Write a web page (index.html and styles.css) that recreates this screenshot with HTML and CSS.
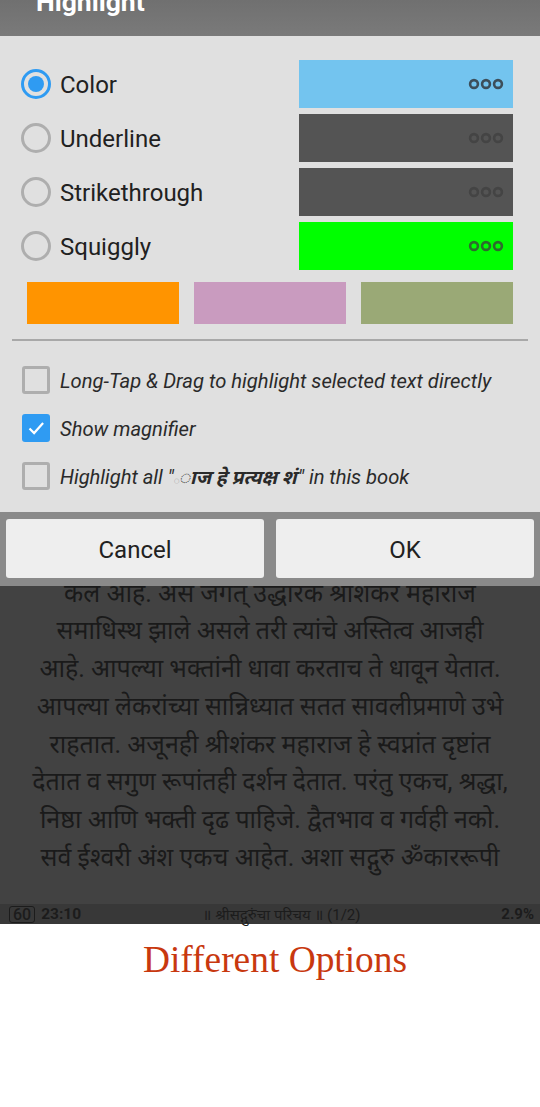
FILE: index.html
```html
<!DOCTYPE html>
<html lang="en">
<head>
<meta charset="utf-8">
<title>Highlight</title>
<link rel="stylesheet" href="styles.css">
</head>
<body>
<div class="screen">
  <header class="title-bar"><h1 class="title">Highlight</h1></header>
  <section class="panel">
    <div class="mode-row">
      <span class="radio radio-on"></span><span class="mode-label">Color</span>
      <span class="swatch sw-blue"><svg class="dots" viewBox="0 0 36 12"><g fill="none" stroke="#3c4e5a" stroke-width="2.6"><circle cx="6" cy="6" r="3.9"/><circle cx="18" cy="6" r="3.9"/><circle cx="30" cy="6" r="3.9"/></g></svg></span>
    </div>
    <div class="mode-row">
      <span class="radio"></span><span class="mode-label">Underline</span>
      <span class="swatch sw-dark"><svg class="dots" viewBox="0 0 36 12"><g fill="none" stroke="#444" stroke-width="2.6"><circle cx="6" cy="6" r="3.9"/><circle cx="18" cy="6" r="3.9"/><circle cx="30" cy="6" r="3.9"/></g></svg></span>
    </div>
    <div class="mode-row">
      <span class="radio"></span><span class="mode-label">Strikethrough</span>
      <span class="swatch sw-dark"><svg class="dots" viewBox="0 0 36 12"><g fill="none" stroke="#444" stroke-width="2.6"><circle cx="6" cy="6" r="3.9"/><circle cx="18" cy="6" r="3.9"/><circle cx="30" cy="6" r="3.9"/></g></svg></span>
    </div>
    <div class="mode-row">
      <span class="radio"></span><span class="mode-label">Squiggly</span>
      <span class="swatch sw-green"><svg class="dots" viewBox="0 0 36 12"><g fill="none" stroke="#2d6a2d" stroke-width="2.6"><circle cx="6" cy="6" r="3.9"/><circle cx="18" cy="6" r="3.9"/><circle cx="30" cy="6" r="3.9"/></g></svg></span>
    </div>
    <div class="presets">
      <span class="preset pre-orange"></span>
      <span class="preset pre-pink"></span>
      <span class="preset pre-olive"></span>
    </div>
    <hr class="divider">
    <div class="check-row"><span class="check"></span><span class="check-label">Long-Tap &amp; Drag to highlight selected text directly</span></div>
    <div class="check-row"><span class="check check-on"><svg viewBox="0 0 28 28" class="tick"><path d="M7.5 14.5l4.6 4.6 9-10" fill="none" stroke="#fff" stroke-width="2.2"/></svg></span><span class="check-label">Show magnifier</span></div>
    <div class="check-row"><span class="check"></span><span class="check-label check-label-mixed">Highlight all "<span class="mark">◌</span><b class="deva-bold">ाज हे प्रत्यक्ष शं</b>" in this book</span></div>
  </section>
  <div class="button-bar">
    <button class="btn">Cancel</button>
    <button class="btn">OK</button>
  </div>
  <main class="reader">
    <div class="reader-text">
      <p>कल आहे. असे जगत् उद्धारक श्रीशंकर महाराज</p>
      <p>समाधिस्थ झाले असले तरी त्यांचे अस्तित्व आजही</p>
      <p>आहे. आपल्या भक्तांनी धावा करताच ते धावून येतात.</p>
      <p>आपल्या लेकरांच्या सान्निध्यात सतत सावलीप्रमाणे उभे</p>
      <p>राहतात. अजूनही श्रीशंकर महाराज हे स्वप्नांत दृष्टांत</p>
      <p>देतात व सगुण रूपांतही दर्शन देतात. परंतु एकच, श्रद्धा,</p>
      <p>निष्ठा आणि भक्ती दृढ पाहिजे. द्वैतभाव व गर्वही नको.</p>
      <p>सर्व ईश्वरी अंश एकच आहेत. अशा सद्गुरु ॐकाररूपी</p>
    </div>
  </main>
  <footer class="status">
    <span class="status-left"><span class="battery">60</span><b class="clock">23:10</b></span>
    <span class="status-mid">॥ श्रीसद्गुरुंचा परिचय ॥ (1/2)</span>
    <b class="status-right">2.9%</b>
  </footer>
  <div class="caption">Different Options</div>
</div>
</body>
</html>
```
FILE: styles.css
```css
* { box-sizing: border-box; }
html, body { margin: 0; padding: 0; background: #fff; }
.screen { width: 540px; height: 1107px; overflow: hidden; font-family: Roboto, "Noto Sans", "Noto Sans Devanagari", sans-serif; }
.title-bar { height: 36px; background: linear-gradient(#707070, #7a7a7a); display: flex; align-items: flex-end; padding: 0 0 19px 36px; overflow: hidden; }
.title { margin: 0; font-size: 26.5px; line-height: 30px; font-weight: 700; color: #fff; flex: none; }
.panel { height: 476px; background: #e0e0e0; padding: 24px 27px 0 21px; }
.mode-row { height: 48px; margin-bottom: 6px; display: flex; align-items: center; }
.radio { width: 30px; height: 30px; border-radius: 50%; border: 3px solid #aeaeae; flex: none; position: relative; }
.radio-on { border-color: #2f9bf2; }
.radio-on::after { content: ""; position: absolute; inset: 4px; border-radius: 50%; background: #2f9bf2; }
.mode-label { margin-left: 9px; font-size: 24px; line-height: 30px; padding-top: 2px; color: #212121; flex: 1; }
.swatch { width: 214px; height: 48px; flex: none; display: flex; align-items: center; justify-content: flex-end; padding-right: 9px; }
.dots { width: 36px; height: 12px; display: block; }
.sw-blue { background: #73c4ef; }
.sw-dark { background: #545454; }
.sw-green { background: #00ff00; }
.presets { display: flex; gap: 15px; margin: 12px 0 0 6px; }
.preset { width: 152px; height: 42px; }
.pre-orange { background: #ff9400; }
.pre-pink { background: #c99bbf; }
.pre-olive { background: #9aa976; }
.divider { border: 0; height: 2px; background: #a8a8a8; margin: 15px -15px 0 -9px; }
.check-row { display: flex; align-items: center; height: 28px; margin: 0 0 20px 1px; }
.divider + .check-row { margin-top: 25px; }
.check { width: 28px; height: 28px; border: 3px solid #aeaeae; border-radius: 3px; flex: none; }
.check-on { background: #2f9bf2; border: 0; }
.tick { width: 28px; height: 28px; display: block; }
.check-label { margin-left: 10px; font-size: 20.2px; line-height: 28px; padding-top: 2px; font-style: italic; color: #2a2a2a; white-space: nowrap; }
.check-label-mixed { padding-top: 6px; letter-spacing: -0.05px; }
.mark { font-size: 10px; font-style: normal; color: #888; }
.deva-bold { display: inline-block; font-weight: 700; font-size: 19.5px; line-height: 20px; transform: skewX(-14deg); }
.button-bar { height: 74px; background: #8a8a8a; padding: 7px 6px 0; display: flex; gap: 12px; }
.btn { width: 258px; height: 59px; border: 0; border-radius: 3px; background: #eeeeee; color: #212121; font: 400 24px Roboto, sans-serif; padding: 2px 0 0; }
.reader { height: 318px; background: #424242; overflow: hidden; }
.reader-text { margin-top: -11.5px; text-align: center; color: #1a1a1a; font-size: 25px; }
.reader-text p { margin: 0; height: 37.8px; line-height: 37.8px; white-space: nowrap; }
.status { height: 20px; background: #383838; color: #1c1c1c; font-size: 15px; display: grid; grid-template-columns: 1fr auto 1fr; align-items: center; padding: 0 6px 0 9px; }
.status-left { display: flex; align-items: center; gap: 6px; }
.battery { border: 1px solid #1c1c1c; border-radius: 3px; height: 17px; line-height: 15px; padding: 0 3px; font-size: 16px; font-weight: 500; }
.clock { font-weight: 700; font-size: 15.5px; }
.status-mid { font-size: 15px; margin-left: 20px; }
.status-right { text-align: right; }
.caption { height: 72px; text-align: center; padding: 14px 0 0 10px; font-family: "Liberation Serif", serif; font-size: 37.4px; line-height: 44px; color: #c8380f; }
```
